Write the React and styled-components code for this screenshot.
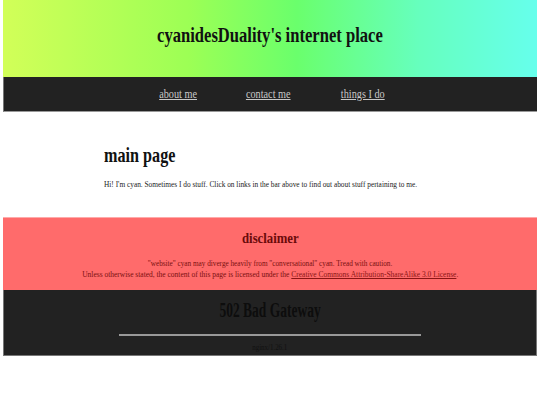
import React from "react";
import styled, { createGlobalStyle } from "styled-components";

const GlobalStyle = createGlobalStyle`
  body {
    margin: 0 3px;
    background: #fff;
    font-family: "Liberation Serif", "DejaVu Serif", serif;
  }
`;

// the reference renders a narrow serif, so text is squeezed horizontally
const Squish = styled.span`
  display: inline-block;
  white-space: nowrap;
  text-decoration: inherit;
  transform: scaleX(${(p) => p.$x});
  transform-origin: ${(p) => (p.$left ? "left" : "center")} center;
`;

const Header = styled.header`
  height: 77px;
  display: flex;
  align-items: center;
  justify-content: center;
  background: linear-gradient(to right, #d2ff58 0%, #9cff55 35%, #6aff6c 55%, #66ffbe 78%, #66ffec 100%);
`;

const Title = styled.h1`
  margin: 0 0 6px;
  font-size: 21px;
  font-weight: bold;
  color: #111;
`;

const Nav = styled.nav`
  height: 35px;
  display: flex;
  align-items: center;
  justify-content: center;
  gap: 40px;
  background: #222;
  border-left: 1px solid #777;
  border-bottom: 1px solid #999;
  box-sizing: border-box;
  padding-left: 3px;
`;

const NavLink = styled.a`
  color: #c8c8c8;
  font-size: 12.5px;
  text-decoration: underline;
`;

const Main = styled.main`
  height: 105px;
  padding: 31px 0 0 101px;
  box-sizing: border-box;
`;

const Heading = styled.h2`
  margin: 0 0 11px;
  font-size: 21px;
  font-weight: bold;
  color: #111;
`;

const Text = styled.p`
  margin: 0;
  font-size: 8.8px;
  color: #222;
`;

const Disclaimer = styled.section`
  height: 73px;
  background: #ff6b6b;
  color: #7a1010;
  text-align: center;
  padding-top: 12px;
  box-sizing: border-box;
  border-top: 1px solid #ffaaaa;
`;

const DisclaimerTitle = styled.h3`
  margin: 0 0 11px;
  font-size: 15px;
  font-weight: bold;
  color: #6a0a0a;
`;

const Line = styled.div`
  font-size: 8.8px;
  line-height: 11px;
`;

const License = styled.a`
  color: #8b1515;
  text-decoration: underline;
`;

const Footer = styled.footer`
  height: 66px;
  background: #222;
  border: 1px solid #777;
  border-top: none;
  box-sizing: border-box;
  display: flex;
  flex-direction: column;
  align-items: center;
  padding-top: 9px;
`;

const ErrorTitle = styled.div`
  font-size: 20px;
  font-weight: bold;
  color: #0d0d0d;
`;

const Rule = styled.hr`
  width: 302px;
  height: 2px;
  margin: 12px 0 6px;
  border: none;
  background: #999;
`;

const Server = styled.div`
  font-size: 9px;
  color: #111;
`;

export default function App() {
  return (
    <>
      <GlobalStyle />
      <Header>
        <Title>
          <Squish $x={0.79}>cyanidesDuality's internet place</Squish>
        </Title>
      </Header>
      <Nav>
        <NavLink href="#"><Squish $x={0.82}>about me</Squish></NavLink>
        <NavLink href="#"><Squish $x={0.82}>contact me</Squish></NavLink>
        <NavLink href="#"><Squish $x={0.82}>things I do</Squish></NavLink>
      </Nav>
      <Main>
        <Heading>
          <Squish $x={0.77} $left>main page</Squish>
        </Heading>
        <Text>
          <Squish $x={0.835} $left>
            Hi! I'm cyan. Sometimes I do stuff. Click on links in the bar above to find out about stuff pertaining to me.
          </Squish>
        </Text>
      </Main>
      <Disclaimer>
        <DisclaimerTitle>
          <Squish $x={0.85}>disclaimer</Squish>
        </DisclaimerTitle>
        <Line>
          <Squish $x={0.82}>"website" cyan may diverge heavily from "conversational" cyan. Tread with caution.</Squish>
        </Line>
        <Line>
          <Squish $x={0.85}>
            Unless otherwise stated, the content of this page is licensed under the{" "}
            <License href="#">Creative Commons Attribution-ShareAlike 3.0 License</License>.
          </Squish>
        </Line>
      </Disclaimer>
      <Footer>
        <ErrorTitle>
          <Squish $x={0.675}>502 Bad Gateway</Squish>
        </ErrorTitle>
        <Rule />
        <Server>
          <Squish $x={0.77}>nginx/1.26.1</Squish>
        </Server>
      </Footer>
    </>
  );
}
